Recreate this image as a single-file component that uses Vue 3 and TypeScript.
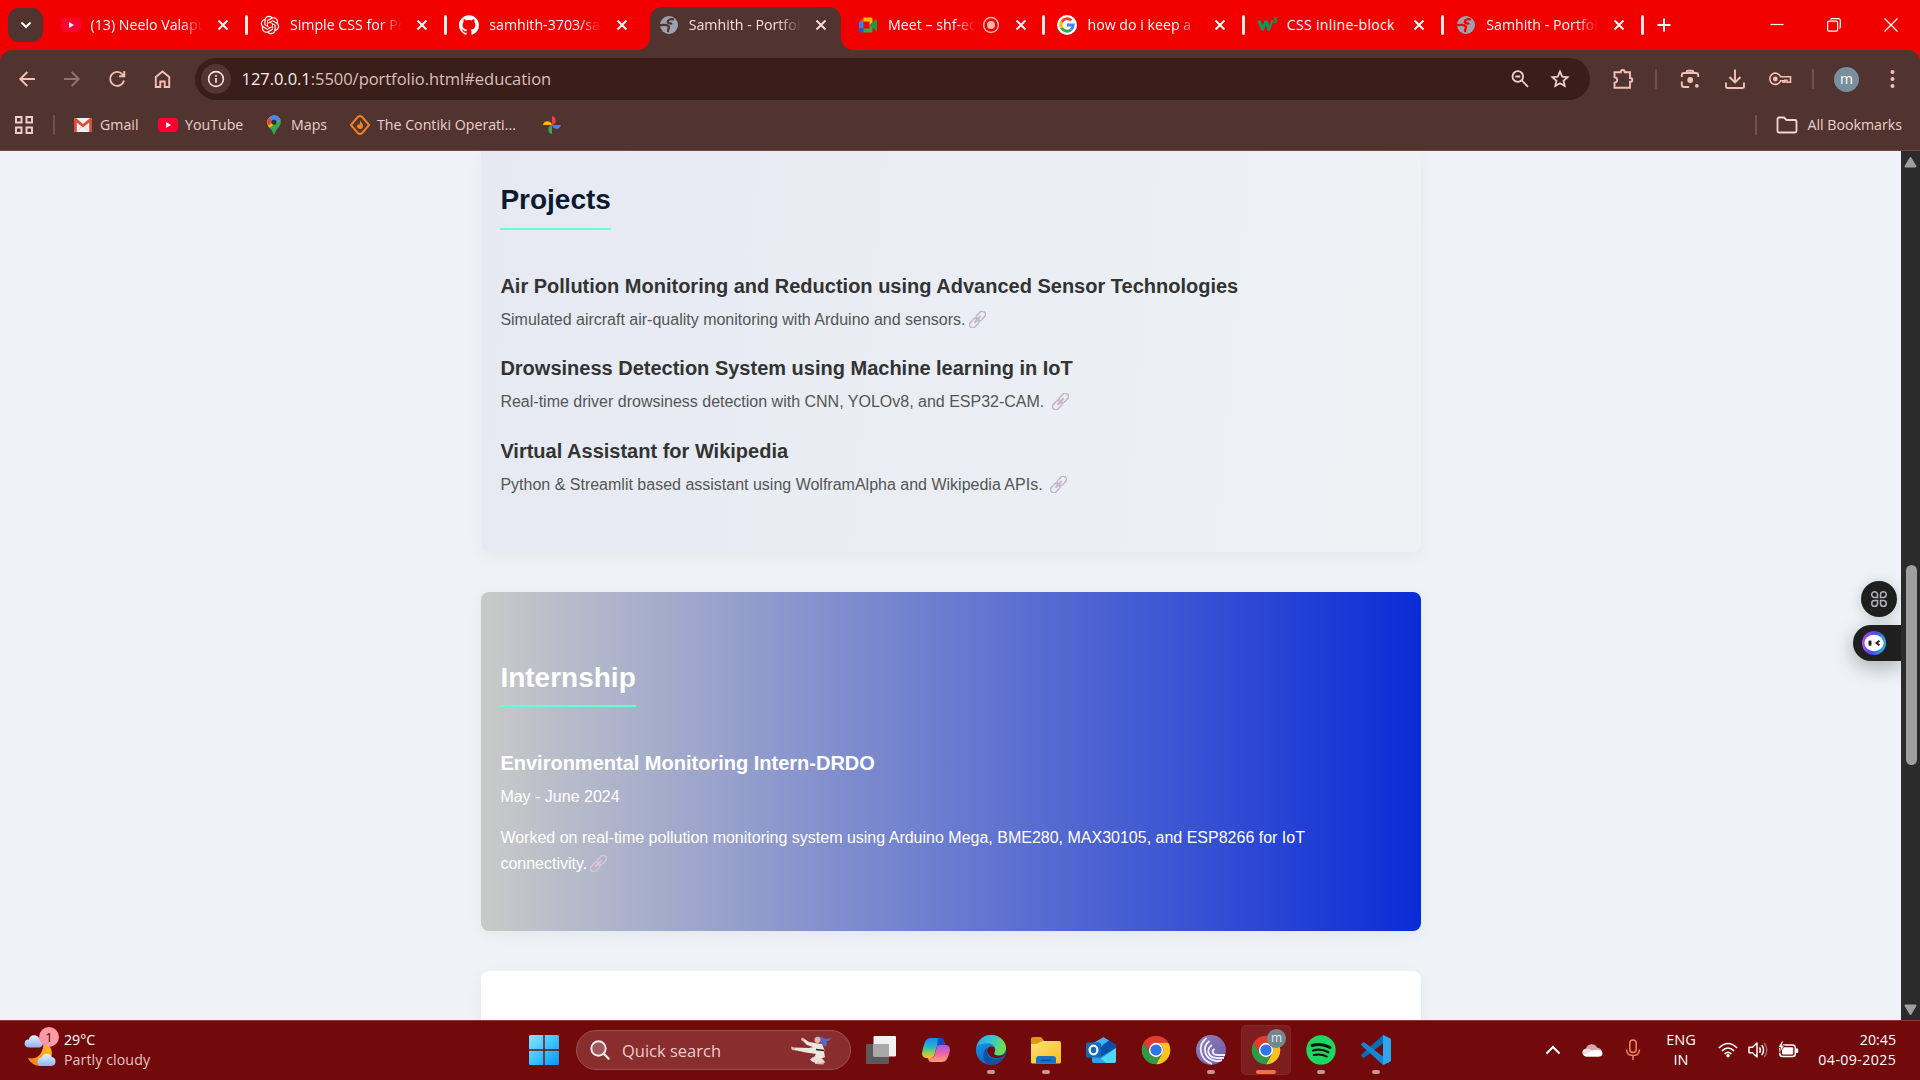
<script setup lang="ts">
interface Tab {
  icon: string
  title: string
  active?: boolean
  recording?: boolean
  separator?: boolean
}

interface Project {
  title: string
  text: string
  gap: boolean
}

const tabs: Tab[] = [
  { icon: 'youtube', title: '(13) Neelo Valapu', separator: true },
  { icon: 'openai', title: 'Simple CSS for Po', separator: true },
  { icon: 'github', title: 'samhith-3703/sa' },
  { icon: 'globe', title: 'Samhith - Portfol', active: true },
  { icon: 'meet', title: 'Meet – shf-ed', recording: true, separator: true },
  { icon: 'google', title: 'how do i keep a', separator: true },
  { icon: 'w3', title: 'CSS inline-block', separator: true },
  { icon: 'globe', title: 'Samhith - Portfol', separator: true },
]

const bookmarks = [
  { icon: 'gmail', label: 'Gmail', width: 85 },
  { icon: 'youtube', label: 'YouTube', width: 106 },
  { icon: 'maps', label: 'Maps', width: 86 },
  { icon: 'contiki', label: 'The Contiki Operati...', width: 192 },
  { icon: 'photos', label: '', width: 22 },
]

const projects: Project[] = [
  {
    title: 'Air Pollution Monitoring and Reduction using Advanced Sensor Technologies',
    text: 'Simulated aircraft air-quality monitoring with Arduino and sensors.',
    gap: false,
  },
  {
    title: 'Drowsiness Detection System using Machine learning in IoT',
    text: 'Real-time driver drowsiness detection with CNN, YOLOv8, and ESP32-CAM.',
    gap: true,
  },
  {
    title: 'Virtual Assistant for Wikipedia',
    text: 'Python & Streamlit based assistant using WolframAlpha and Wikipedia APIs.',
    gap: true,
  },
]

const apps = [
  { icon: 'taskview' },
  { icon: 'copilot' },
  { icon: 'edge', running: true },
  { icon: 'folder', running: true },
  { icon: 'outlook' },
  { icon: 'chrome' },
  { icon: 'bittorrent', running: true },
  { icon: 'chrome', focused: true },
  { icon: 'spotify', running: true },
  { icon: 'vscode', running: true },
]
</script>

<template>
  <div class="screen">
    <svg class="sprite" width="0" height="0" aria-hidden="true">
      <defs>
        <linearGradient id="g-win" x1="0" y1="0" x2="1" y2="1">
          <stop offset="0" stop-color="#8be3ff" /><stop offset=".5" stop-color="#3cc5fb" /><stop offset="1" stop-color="#0a93f5" />
        </linearGradient>
        <linearGradient id="g-edge1" x1="0" y1="0" x2="1" y2=".3">
          <stop offset="0" stop-color="#2aa7e8" /><stop offset=".55" stop-color="#35c7d0" /><stop offset="1" stop-color="#6fe04c" />
        </linearGradient>
        <linearGradient id="g-edge2" x1="0" y1="0" x2=".6" y2="1">
          <stop offset="0" stop-color="#1f9be6" /><stop offset="1" stop-color="#0b63c0" />
        </linearGradient>
        <linearGradient id="g-folder" x1="0" y1="0" x2="1" y2="1">
          <stop offset="0" stop-color="#ffe07a" /><stop offset="1" stop-color="#f9bf1c" />
        </linearGradient>
        <linearGradient id="g-cp1" x1="0" y1="0" x2="0" y2="1">
          <stop offset="0" stop-color="#1f86f0" /><stop offset=".45" stop-color="#25b8c8" /><stop offset=".75" stop-color="#9bd04a" /><stop offset="1" stop-color="#f5c02c" />
        </linearGradient>
        <linearGradient id="g-cp2" x1="0" y1="0" x2="0" y2="1">
          <stop offset="0" stop-color="#a35be8" /><stop offset=".5" stop-color="#ee62b0" /><stop offset="1" stop-color="#ffa552" />
        </linearGradient>
        <linearGradient id="g-bt" x1="0" y1="0" x2="1" y2="1">
          <stop offset="0" stop-color="#8f83bd" /><stop offset="1" stop-color="#6d5aa6" />
        </linearGradient>
        <linearGradient id="g-ring" x1="0" y1=".6" x2="1" y2=".8">
          <stop offset="0" stop-color="#b04bf0" /><stop offset=".45" stop-color="#4747f5" /><stop offset="1" stop-color="#22c3d8" />
        </linearGradient>
        <linearGradient id="g-cloud" x1="0" y1="0" x2="0" y2="1">
          <stop offset="0" stop-color="#e6f0ff" /><stop offset="1" stop-color="#8fb4ee" />
        </linearGradient>
        <linearGradient id="g-moon" x1="1" y1="0" x2="0" y2="1">
          <stop offset="0" stop-color="#ffc21a" /><stop offset="1" stop-color="#ee7a1c" />
        </linearGradient>
      </defs>

      <symbol id="i-youtube" viewBox="0 0 20 20">
        <rect x="0" y="3" width="20" height="14" rx="3.4" fill="#ff0033" />
        <path d="M8 7l5 3-5 3z" fill="#fff" />
      </symbol>
      <symbol id="i-openai" viewBox="-1 -1 26 26">
        <path fill="#fff" d="M22.2819 9.8211a5.9847 5.9847 0 0 0-.5157-4.9108 6.0462 6.0462 0 0 0-6.5098-2.9A6.0651 6.0651 0 0 0 4.9807 4.1818a5.9847 5.9847 0 0 0-3.9977 2.9 6.0462 6.0462 0 0 0 .7427 7.0966 5.98 5.98 0 0 0 .511 4.9107 6.051 6.051 0 0 0 6.5146 2.9001A5.9847 5.9847 0 0 0 13.2599 24a6.0557 6.0557 0 0 0 5.7718-4.2058 5.9894 5.9894 0 0 0 3.9977-2.9001 6.0557 6.0557 0 0 0-.7475-7.0729zm-9.022 12.6081a4.4755 4.4755 0 0 1-2.8764-1.0408l.1419-.0804 4.7783-2.7582a.7948.7948 0 0 0 .3927-.6813v-6.7369l2.02 1.1686a.071.071 0 0 1 .038.052v5.5826a4.504 4.504 0 0 1-4.4945 4.4944zm-9.6607-4.1254a4.4708 4.4708 0 0 1-.5346-3.0137l.142.0852 4.783 2.7582a.7712.7712 0 0 0 .7806 0l5.8428-3.3685v2.3324a.0804.0804 0 0 1-.0332.0615L9.74 19.9502a4.4992 4.4992 0 0 1-6.1408-1.6464zM2.3408 7.8956a4.485 4.485 0 0 1 2.3655-1.9728V11.6a.7664.7664 0 0 0 .3879.6765l5.8144 3.3543-2.0201 1.1685a.0757.0757 0 0 1-.071 0l-4.8303-2.7865A4.504 4.504 0 0 1 2.3408 7.872zm16.5963 3.8558L13.1038 8.364 15.1192 7.2a.0757.0757 0 0 1 .071 0l4.8303 2.7913a4.4944 4.4944 0 0 1-.6765 8.1042v-5.6772a.79.79 0 0 0-.407-.667zm2.0107-3.0231l-.142-.0852-4.7735-2.7818a.7759.7759 0 0 0-.7854 0L9.409 9.2297V6.8974a.0662.0662 0 0 1 .0284-.0615l4.8303-2.7866a4.4992 4.4992 0 0 1 6.6802 4.66zM8.3065 12.863l-2.02-1.1638a.0804.0804 0 0 1-.038-.0567V6.0742a4.4992 4.4992 0 0 1 7.3757-3.4537l-.142.0805L8.704 5.459a.7948.7948 0 0 0-.3927.6813zm1.0976-2.3654l2.602-1.4998 2.6069 1.4998v2.9994l-2.5974 1.4997-2.6067-1.4997Z" />
      </symbol>
      <symbol id="i-github" viewBox="0 0 24 24">
        <path fill="#fff" d="M12 .297c-6.63 0-12 5.373-12 12 0 5.303 3.438 9.8 8.205 11.385.6.113.82-.258.82-.577 0-.285-.01-1.04-.015-2.04-3.338.724-4.042-1.61-4.042-1.61C4.422 18.07 3.633 17.7 3.633 17.7c-1.087-.744.084-.729.084-.729 1.205.084 1.838 1.236 1.838 1.236 1.07 1.835 2.809 1.305 3.495.998.108-.776.417-1.305.76-1.605-2.665-.3-5.466-1.332-5.466-5.93 0-1.31.465-2.38 1.235-3.22-.135-.303-.54-1.523.105-3.176 0 0 1.005-.322 3.3 1.23.96-.267 1.98-.399 3-.405 1.02.006 2.04.138 3 .405 2.28-1.552 3.285-1.23 3.285-1.23.645 1.653.24 2.873.12 3.176.765.84 1.23 1.91 1.23 3.22 0 4.61-2.805 5.625-5.475 5.92.42.36.81 1.096.81 2.22 0 1.606-.015 2.896-.015 3.286 0 .315.21.69.825.57C20.565 22.092 24 17.592 24 12.297c0-6.627-5.373-12-12-12" />
      </symbol>
      <symbol id="i-globe" viewBox="0 0 20 20">
        <circle cx="10" cy="10" r="9" fill="#9aa3ad" />
        <path d="M14 4.300c-2-.4-4.700.3-5.200 2.100-.4 1.700 1.400 2 3.600 2.300M2 10.200c2.600-.6 6-.2 7.400.8 1.800 1.300-.5 2.400-.4 5.200" fill="none" stroke="currentColor" stroke-width="2.300" stroke-linecap="round" stroke-linejoin="round" />
      </symbol>
      <symbol id="i-meet" viewBox="0 0 20 20">
        <path d="M1 7l4.500-4.500V7z" fill="#ea4335" />
        <path d="M5.500 2.500H13a1.500 1.500 0 0 1 1.500 1.500v3.500L11.500 10V6.500h-6z" fill="#fbbc04" />
        <path d="M1 7h4.500v6.500H1z" fill="#2684fc" />
        <path d="M1 13.500h4.500v4H2.500A1.500 1.500 0 0 1 1 16z" fill="#0066da" />
        <path d="M5.500 13.500h6V10l3 2.500V16a1.500 1.500 0 0 1-1.500 1.500H5.500z" fill="#34a853" />
        <path d="M11.500 10l6.300-5.600q1.200-.8 1.200.6v10q0 1.400-1.200.6z" fill="#1e9a45" />
      </symbol>
      <symbol id="i-google" viewBox="0 0 20 20">
        <circle cx="10" cy="10" r="10" fill="#fff" />
        <g fill="none" stroke-width="3">
          <path d="M14.300 5.500A6.200 6.200 0 0 0 4.600 7" stroke="#ea4335" />
          <path d="M4.700 6.800a6.200 6.200 0 0 0 0 6.400" stroke="#fbbc05" />
          <path d="M4.600 13a6.200 6.200 0 0 0 9.300 1.800" stroke="#34a853" />
          <path d="M13.900 14.800A6.200 6.200 0 0 0 16.200 10H10" stroke="#4285f4" />
        </g>
      </symbol>
      <symbol id="i-w3" viewBox="0 0 20 20">
        <path d="M0 5.500h3.600l2 5.200 2-5.200h2.800l2 5.200 1.700-5.200h2.300l-3.600 10h-2.300L9 9.800l-2.200 5.700H4.500z" fill="#059b62" />
        <path d="M16.300 3h3l-1.400 1.800q1.800.2 1.500 1.700-.5 1.300-3.100.8" fill="none" stroke="#059b62" stroke-width="1.200" />
      </symbol>
      <symbol id="i-gmail" viewBox="0 0 20 20">
        <rect x="1" y="3" width="18" height="14" rx="1.500" fill="#f0f0f0" />
        <path d="M1 4.500A1.500 1.500 0 0 1 3.500 3.400L10 8.900l6.500-5.500A1.500 1.500 0 0 1 19 4.500V17h-2.800V7.500L10 12.500 3.800 7.500V17H2.500A1.500 1.500 0 0 1 1 15.500z" fill="#dd4b3e" />
        <path d="M3.800 17l4.800-5.600M16.200 17l-4.800-5.600" stroke="#cfcfcf" stroke-width=".8" />
      </symbol>
      <symbol id="i-maps" viewBox="0 0 20 20">
        <path d="M10 .5a6.800 6.800 0 0 1 6.800 6.800c0 4.700-5 6.200-6 11.500q-.8 1.400-1.600 0C8.700 14.500 3.200 12 3.200 7.300A6.800 6.800 0 0 1 10 .5z" fill="#34a853" />
        <path d="M10 .5a6.800 6.800 0 0 1 6.500 4.800L5.300 12.700C4 11 3.200 9.300 3.200 7.300A6.800 6.800 0 0 1 10 .5z" fill="#fbbc04" />
        <path d="M10 .5a6.800 6.800 0 0 1 6.500 4.800L9 9 4.800 3A6.800 6.800 0 0 1 10 .5z" fill="#4285f4" />
        <path d="M4.800 3L9 6.500 5 10.500A6.400 6.400 0 0 1 3.200 7.300 6.800 6.800 0 0 1 4.800 3z" fill="#ea4335" />
        <circle cx="10" cy="7.200" r="2.500" fill="#3b2b2a" />
      </symbol>
      <symbol id="i-contiki" viewBox="0 0 20 20">
        <path d="M8.600 1.200L.9 10l7.700 8.800M11.400 1.200L19.100 10l-7.700 8.800M8.200 1.800q1.800-1.500 3.600 0M8.200 18.200q1.800 1.500 3.600 0" fill="none" stroke="#f58220" stroke-width="2" />
        <path d="M10 4.500q.5 2 2 3.700t.9 4q-.8 2-2.900 2-2.700-.2-3-2.600-.1-1.700 1.200-2.700.4 1 1.100 1Q10.600 7.500 10 4.500z" fill="#f58220" />
      </symbol>
      <symbol id="i-photos" viewBox="0 0 20 20">
        <path d="M10 1a4.600 4.600 0 0 1 0 9z" fill="#ea4335" />
        <path d="M10 10h9a4.600 4.600 0 0 1-9 0z" fill="#4285f4" />
        <path d="M10 19a4.600 4.600 0 0 1 0-9z" fill="#34a853" />
        <path d="M1 10a4.600 4.600 0 0 1 9 0z" fill="#fbbc04" />
      </symbol>

      <symbol id="i-chrome" viewBox="1 1 46 46">
        <path d="M4.950 13A22 22 0 0 1 43.050 13L24 13A11 11 0 0 0 14.470 29.500Z" fill="#e33b2e" />
        <path d="M43.050 13A22 22 0 0 1 24 46L33.530 29.500A11 11 0 0 0 24 13Z" fill="#fcc31e" />
        <path d="M24 46A22 22 0 0 1 4.950 13L14.470 29.500A11 11 0 0 0 33.530 29.500Z" fill="#2c9c47" />
        <circle cx="24" cy="24" r="11" fill="#fff" />
        <circle cx="24" cy="24" r="8.600" fill="#2f74ea" />
      </symbol>
      <symbol id="i-taskview" viewBox="0 0 30 30">
        <rect x="0" y="9" width="23" height="20" rx="1" fill="#5a5a5a" />
        <rect x="7.500" y="1" width="22.500" height="20.500" rx="1" fill="#f1f1f1" />
        <path d="M7.500 9H23v12.500H7.500z" fill="#a9a9a9" />
      </symbol>
      <symbol id="i-copilot" viewBox="0 0 30 30">
        <path d="M9.500 3h10q2.500 0 3.300 2.500L24 10h-5.500q-2.300 0-3 2.300l-2.300 8.200q-.8 2.500-3.200 2.500H5q-4-.5-4-5 .6-5.500 3.200-11.500Q5.800 3 9.500 3z" fill="url(#g-cp1)" />
        <path d="M17 3h3q2.300 0 3 2.500L24 10h-5.500q-1.800 0-2.500 1.400z" fill="#1549c2" />
        <path d="M20.500 27h-10q-2.500 0-3.200-2.500L6.500 23H10q2.600 0 3.400-2.500l2.300-8.200q.7-2.300 3-2.300H25q4 .5 4 5-.6 4.500-3 9-1.600 3-5.500 3z" fill="url(#g-cp2)" />
      </symbol>
      <symbol id="i-edge" viewBox="0 0 30 30">
        <circle cx="15" cy="15" r="15" fill="url(#g-edge2)" />
        <path d="M.3 12.500C2 4.500 8 0 15 0c9 0 15 6.500 15 13 0 4.500-3.500 7.500-7.500 7.500-3 0-5-1-4.300-2.500 3-4.500-.5-9.700-6.500-9.700C6 8.300 1.500 10 .3 12.500z" fill="url(#g-edge1)" />
        <path d="M11.500 12.500c-2.500 5 1.300 11.500 8 11.500 3.500 0 6.500-1.200 8.300-2.300C25.500 27 20.500 30 15 30 8 29.500 7 23 7.300 20c.3-3.500 2-6 4.200-7.500z" fill="#12529f" />
        <path d="M15 11.500c-3 .3-4.500 3-3.600 5.700 1.300 3.600 5.200 6 9.900 5.800 4-.2 7.700-2.500 8.700-5-1.500 2-4.500 3.200-7.500 2.700-3-.3-4.800-1.200-4.300-2.700 1.800-3.200.5-6.800-3.200-6.500z" fill="#720a0b" />
      </symbol>
      <symbol id="i-folder" viewBox="0 0 30 30">
        <path d="M0 4q0-2 2-2h8l3 3.500V10H0z" fill="#dd9a0c" />
        <path d="M0 9q4 0 6-.2Q10 6 12.500 6H28q2 0 2 2v19q0 1.500-1.500 1.500h-27Q0 28.500 0 27z" fill="url(#g-folder)" />
        <path d="M5 28.500V24q0-3 3-3h14q3 0 3 3v4.500z" fill="#1673c8" />
        <rect x="9.500" y="24.500" width="11" height="1.600" rx=".8" fill="#0e4f96" />
      </symbol>
      <symbol id="i-outlook" viewBox="0 0 30 30">
        <path d="M5 9.500L17.500 2.200 30 10v16q0 2-2 2H8z" fill="#1a83dc" />
        <path d="M5 9.500L17.500 2.200 23 5.500 9 14z" fill="#43b0f2" />
        <path d="M23 5.500L30 10v3L14 22l-3-6z" fill="#0d4fa6" />
        <path d="M30 13v13q0 2-2 2H8z" fill="#55d6f8" />
        <path d="M6 18l5 2 9 8H8q-2 0-2-2z" fill="#2aa2ee" />
        <rect x="0" y="7.500" width="15" height="15" rx="1.500" fill="#0f6cbd" />
        <ellipse cx="7.500" cy="15" rx="3.900" ry="4.300" fill="none" stroke="#fff" stroke-width="2.200" />
      </symbol>
      <symbol id="i-bittorrent" viewBox="0 0 30 30">
        <circle cx="15" cy="15" r="15" fill="url(#g-bt)" />
        <g fill="none" stroke="#efecf8" stroke-width="1.900">
          <path d="M10.500 3C1 10 3.500 24.500 16 28.800" /><path d="M13.500 6c-8 6-5.500 18 6.500 20 2 .2 4 0 6-.8" />
          <path d="M16 10c-6.500 4.500-4 12.700 5 13h7" /><path d="M18.500 14c-3.500 2.200-1.500 6 3 6h7.500" />
        </g>
      </symbol>
      <symbol id="i-spotify" viewBox="0 0 30 30">
        <circle cx="15" cy="15" r="14.700" fill="#1ed760" />
        <g fill="none" stroke="#111" stroke-linecap="round">
          <path d="M6 10.500c6-1.700 12.500-1.100 18 2" stroke-width="2.900" /><path d="M7 15.500c5-1.400 10.700-.8 15.300 1.800" stroke-width="2.300" />
          <path d="M7.800 20c4.500-1 9-.6 13 1.600" stroke-width="1.900" />
        </g>
      </symbol>
      <symbol id="i-vscode" viewBox="0 0 30 30">
        <path d="M22 0l7 3.300q1 .5 1 1.700L22 8.500 3.500 22.600q-.8.500-1.500 0L.5 21.200q-.8-.8 0-1.600z" fill="#0a6cb4" />
        <path d="M22 30l7-3.300q1-.5 1-1.700l-8-3.500L3.500 7.400q-.8-.5-1.500 0L.5 8.800q-.8.800 0 1.600z" fill="#1686d3" />
        <path d="M22 0l7 3.300q1 .5 1 1.700v20q0 1.200-1 1.700L22 30z" fill="#2ba6ef" />
      </symbol>
      <symbol id="i-link" viewBox="0 0 17 17">
        <g fill="none" stroke="currentColor" stroke-width="1.500" transform="rotate(43 8.500 8.500)">
          <rect x="5.300" y="-1.600" width="6.400" height="10.600" rx="3.200" />
          <rect x="5.300" y="8" width="6.400" height="10.600" rx="3.200" />
          <path d="M8.500 4.800v7.400" stroke-width="2" stroke-linecap="round" class="link-bar" />
        </g>
      </symbol>
    </svg>

    <header class="tabstrip">
      <div class="tab-search">
        <svg width="14" height="14" viewBox="0 0 14 14"><path d="M2.500 4.500L7 9l4.500-4.500" fill="none" stroke="#fff" stroke-width="2" /></svg>
      </div>
      <div class="tabs">
        <div v-for="(tab, i) in tabs" :key="i" class="tab" :class="{ active: tab.active }">
          <svg class="favicon"><use :href="'#i-' + tab.icon" /></svg>
          <span class="tab-title" :class="{ short: tab.recording, full: tab.icon === 'w3' }">{{ tab.title }}</span>
          <svg v-if="tab.recording" class="rec" width="18" height="18" viewBox="0 0 18 18">
            <circle cx="9" cy="9" r="7.400" fill="none" stroke="#ffb4ac" stroke-width="1.500" /><circle cx="9" cy="9" r="4" fill="#ffb4ac" />
          </svg>
          <svg class="tab-close" width="12" height="12" viewBox="0 0 12 12"><path d="M1.500 1.500l9 9M10.500 1.500l-9 9" stroke="currentColor" stroke-width="1.900" /></svg>
          <i v-if="tab.separator" class="tab-sep"></i>
        </div>
      </div>
      <svg class="new-tab" width="14" height="14" viewBox="0 0 14 14"><path d="M7 .5v13M.5 7h13" stroke="#fff" stroke-width="2" /></svg>
      <div class="window-buttons">
        <svg width="14" height="14" viewBox="0 0 14 14"><path d="M.5 6.500h13" stroke="#fff" stroke-width="1.200" /></svg>
        <svg width="14" height="14" viewBox="0 0 14 14"><rect x=".6" y="3.200" width="10" height="10" rx="1.500" fill="none" stroke="#fff" stroke-width="1.200" /><path d="M3.500 1.500q.3-.9 1.300-.9h6.500q2 0 2 2v6.500q0 1-.9 1.300" fill="none" stroke="#fff" stroke-width="1.200" /></svg>
        <svg width="14" height="14" viewBox="0 0 14 14"><path d="M.5.5l13 13M13.500.5l-13 13" stroke="#fff" stroke-width="1.200" /></svg>
      </div>
    </header>

    <section class="chrome-bars">
      <div class="toolbar">
        <div class="slot"><svg width="20" height="20" viewBox="0 0 20 20"><path d="M18 10H3.500M10.300 3L3.300 10l7 7" /></svg></div>
        <div class="slot dim"><svg width="20" height="20" viewBox="0 0 20 20"><path d="M2 10h14.500M9.700 3l7 7-7 7" /></svg></div>
        <div class="slot"><svg width="20" height="20" viewBox="0 0 20 20"><path d="M17 11.500A7 7 0 1 1 15.300 5.100l1.500 1.600M17.300 2v5.200h-5.200" /></svg></div>
        <div class="slot"><svg width="20" height="20" viewBox="0 0 20 20"><path d="M3.800 8l6.700-5.500L17.200 8v10h-4.500v-5.500H8.300V18H3.800z" /></svg></div>
        <div class="omnibox">
          <span class="site-info">
            <svg width="18" height="18" viewBox="0 0 18 18"><circle cx="9" cy="9" r="7.400" fill="none" stroke="#f6e3df" stroke-width="1.600" /><path d="M9 8v4.800M9 5v1.700" stroke="#f6e3df" stroke-width="1.700" /></svg>
          </span>
          <span class="url"><b>127.0.0.1</b>:5500/portfolio.html#education</span>
          <span class="omni-actions">
            <svg width="20" height="20" viewBox="0 0 20 20"><circle cx="7.800" cy="7.500" r="5.300" /><path d="M11.700 11.400L18 17.800M5.300 7.500h5" /></svg>
            <svg width="20" height="20" viewBox="0 0 20 20"><path d="M10 2.600l2.200 5 5.400.500-4.100 3.600 1.200 5.300-4.700-2.800L5.300 17l1.200-5.300-4.100-3.600 5.400-.500z" /></svg>
          </span>
        </div>
        <div class="slot puzzle"><svg width="22" height="22" viewBox="0 0 22 22"><path d="M2.500 4.300h6.300q0-2.300 2-2.300t2 2.300h5.200v5.700q2.300 0 2.300 1.900t-2.300 1.900v6H2.500v-5q2.600-.5 2.600-2.900t-2.600-2.700z" /></svg></div>
        <i class="bar-sep"></i>
        <div class="slot"><svg width="22" height="22" viewBox="0 0 22 22"><path d="M2.800 9V7.300q0-2.300 2.300-2.300h11.800q2.300 0 2.300 2.300V9M2.800 13.500v3.200q0 2.300 2.300 2.300h5M7.500 4.200q.3-1.500 1.500-1.500h4q1.200 0 1.500 1.500" /><circle cx="11.200" cy="12" r="2.900" class="solid" /><circle cx="17.800" cy="17.800" r="1.900" class="solid" /></svg></div>
        <div class="slot"><svg width="22" height="22" viewBox="0 0 22 22"><path d="M11 1.500v12.500M5.500 9l5.500 5.500L16.500 9M2 14.500v3.700q0 1.800 1.800 1.800h14.400q1.800 0 1.800-1.800v-3.700" /></svg></div>
        <div class="slot"><svg class="key" width="24" height="22" viewBox="0 0 24 22"><path d="M12.600 8.800H22.500v5.400H19v-1.800h-2.200v1.800h-1.600v-1.400h-2.600a5.600 5.600 0 1 1 0-4z" /><circle cx="7.300" cy="11" r="2.400" class="solid" /></svg></div>
        <i class="bar-sep"></i>
        <div class="slot"><span class="avatar">m</span></div>
        <div class="slot"><svg width="20" height="22" viewBox="0 0 20 22"><g class="solid"><circle cx="10.500" cy="4" r="2" /><circle cx="10.500" cy="11" r="2" /><circle cx="10.500" cy="18" r="2" /></g></svg></div>
      </div>
      <div class="bookmarks">
        <svg class="apps-grid" width="20" height="20" viewBox="0 0 20 20"><path d="M2 2h5.500v5.500H2zM12.500 2H18v5.500h-5.500zM2 12.500h5.500V18H2zM12.500 12.500H18V18h-5.500z" fill="none" stroke="#f0cfc9" stroke-width="1.900" /></svg>
        <i class="bar-sep"></i>
        <div v-for="b in bookmarks" :key="b.icon" class="bookmark" :style="{ width: b.width + 'px' }">
          <svg class="favicon"><use :href="'#i-' + b.icon" /></svg>
          <span v-if="b.label">{{ b.label }}</span>
        </div>
        <div class="all-bookmarks">
          <i class="bar-sep"></i>
          <svg width="22" height="18" viewBox="0 0 22 18"><path d="M1.500 3q0-1.500 1.500-1.500h5l2.500 2.500H19q1.500 0 1.500 1.500V15q0 1.500-1.500 1.500H3Q1.500 16.500 1.500 15z" fill="none" stroke="#f0d8d3" stroke-width="1.800" /></svg>
          <span>All Bookmarks</span>
        </div>
      </div>
    </section>

    <div class="viewport">
      <main class="page">
        <section class="card projects">
          <h2>Projects</h2>
          <article v-for="p in projects" :key="p.title">
            <h3>{{ p.title }}</h3>
            <p>{{ p.text }}<svg class="link" :class="{ wide: p.gap }"><use href="#i-link" /></svg></p>
          </article>
        </section>
        <section class="card internship">
          <h2>Internship</h2>
          <h3>Environmental Monitoring Intern-DRDO</h3>
          <p class="dates">May - June 2024</p>
          <p>Worked on real-time pollution monitoring system using Arduino Mega, BME280, MAX30105, and ESP8266 for IoT connectivity.<svg class="link faint"><use href="#i-link" /></svg></p>
        </section>
        <section class="card next"></section>
      </main>
      <aside class="widgets">
        <div class="widget-round">
          <svg width="18" height="18" viewBox="0 0 18 18"><path d="M7.500 7.500H4.600A2.900 2.900 0 1 1 7.500 4.600zM10.500 7.500V4.600a2.900 2.900 0 1 1 2.900 2.900zM7.500 10.500v2.900a2.900 2.900 0 1 1-2.900-2.900zM10.500 10.500h2.900a2.900 2.900 0 1 1-2.900 2.900z" fill="none" stroke="#b4b1b8" stroke-width="1.500" /></svg>
        </div>
        <div class="widget-pill">
          <svg width="24" height="24" viewBox="0 0 24 24"><circle cx="12" cy="12" r="12" fill="url(#g-ring)" /><ellipse cx="12" cy="12" rx="9.600" ry="8.300" fill="#fff" /><rect x="6.500" y="9.500" width="3" height="5.200" rx="1" fill="#222" /><path d="M17.500 9.800l-3 2.300 3 2.200" fill="none" stroke="#222" stroke-width="1.900" /></svg>
        </div>
      </aside>
      <div class="scrollbar">
        <svg width="19" height="22" viewBox="0 0 19 22"><path d="M9.500 7l5 8.500h-10z" fill="#9f9f9f" stroke="#9f9f9f" stroke-width="2" stroke-linejoin="round" /></svg>
        <div class="thumb"></div>
        <svg width="19" height="22" viewBox="0 0 19 22"><path d="M9.500 16l5-8.500h-10z" fill="#9f9f9f" stroke="#9f9f9f" stroke-width="2" stroke-linejoin="round" /></svg>
      </div>
    </div>

    <footer class="taskbar">
      <div class="weather">
        <svg width="36" height="38" viewBox="0 0 36 38">
          <path d="M27 18a12 12 0 0 1-23 9q9 2 13-5t1-10q7 1 9 6z" fill="url(#g-moon)" />
          <path d="M4.500 16.500a4 4 0 0 1 .3-8 5.500 5.500 0 0 1 10.500-.5q3 0 3.500 3.500t-3 5z" fill="url(#g-cloud)" />
          <path d="M17 35a4.300 4.300 0 0 1 .5-8.500 5.500 5.500 0 0 1 10.200-.5q3.800.5 3.800 4.500t-4 4.500z" fill="url(#g-cloud)" />
        </svg>
        <span class="weather-badge">1</span>
        <div class="weather-text"><span>29°C</span><span class="soft">Partly cloudy</span></div>
      </div>
      <svg class="start" width="30" height="30" viewBox="0 0 30 30"><path d="M0 1.500Q0 0 1.500 0h12.800v14.300H0zM15.700 0h12.800Q30 0 30 1.500v12.800H15.700zM0 15.700h14.300V30H1.500Q0 30 0 28.500zM15.700 15.700H30v12.800q0 1.500-1.500 1.500H15.700z" fill="url(#g-win)" /></svg>
      <div class="search">
        <svg width="20" height="20" viewBox="0 0 20 20"><circle cx="8.500" cy="8.500" r="7.200" fill="#a05a5c" stroke="#f3eded" stroke-width="1.900" /><path d="M13.800 13.800l4.800 4.800" stroke="#f3eded" stroke-width="2.200" stroke-linecap="round" /></svg>
        <span>Quick search</span>
        <svg class="karate" width="42" height="30" viewBox="0 0 42 30">
          <path d="M24 2.500q4-2.500 8 .500 4 1.500 9-.500-2 3.500-6 4 2 2.500-.500 5-3-.500-4.500-4.500-2-1.500-6-.500z" fill="#5868c8" />
          <circle cx="26.500" cy="5" r="3" fill="#e8b79b" />
          <path d="M24 8l7 1 2.500 6-.5 2 1 5-8 3.500-4-1.500 3-5-10-1.500L3 15l.5-2.500L18 13l4-1-6-2-4-4 1.500-2L18 7z" fill="#ece6e0" />
          <path d="M0 11.500l3.500 1L3 15.500l-2.500-1zM11 2.500l3 1.500-1.500 2.500-2.500-1.500zM24 27l9 .5-.5 2L24 29z" fill="#e8b79b" />
          <path d="M22 22l9 1.500 3.500 4-10 .5q-5-2-5.500-3.500z" fill="#e4dcd6" />
          <path d="M25 14.500l8 1" stroke="#222" stroke-width="1.600" />
        </svg>
      </div>
      <div class="apps">
        <div v-for="(a, i) in apps" :key="i" class="app" :class="{ running: a.running, focused: a.focused }">
          <svg width="30" height="30"><use :href="'#i-' + a.icon" /></svg>
          <span v-if="a.focused" class="profile">m</span>
          <i class="indicator"></i>
        </div>
      </div>
      <div class="tray">
        <svg class="chev" width="16" height="10" viewBox="0 0 16 10"><path d="M1.500 8.500L8 2l6.500 6.500" fill="none" stroke="#fff" stroke-width="2" /></svg>
        <svg class="cloud" width="21" height="14" viewBox="0 0 21 14"><path d="M4 5.500A6 6 0 0 1 15 4.500q4 .5 5 4L12 12H4z" fill="#d4a9aa" /><path d="M4 13.500a3.900 3.900 0 0 1-.5-7.700q3-.6 5 .9L17 10l3 .500q.5 3-3.500 3z" fill="#f0dfdf" /><path d="M2 12l9-4.500q2-1 5-.5 4 0 4.500 3 0 3.500-4 3.500H4q-1.500-.3-2-1.500z" fill="#fff" /></svg>
        <svg class="mic" width="16" height="22" viewBox="0 0 16 22"><g fill="none" stroke="#f0875a" stroke-width="1.500"><rect x="4.800" y="1" width="6.400" height="12.500" rx="3.200" /><path d="M1.500 10.500q.3 6 6.500 6t6.500-6M8 16.500V21" /></g></svg>
        <div class="lang"><span>ENG</span><span>IN</span></div>
        <svg class="wifi" width="20" height="16" viewBox="0 0 20 16"><g fill="none" stroke="#fff" stroke-width="1.600"><path d="M.8 6q9.200-9 18.400 0M3.800 9q6.200-6 12.400 0M6.600 12q3.400-3.200 6.800 0" /></g><circle cx="10" cy="13.800" r="1.700" fill="#fff" /></svg>
        <svg class="sound" width="20" height="18" viewBox="0 0 20 18"><path d="M1 6.200h3.500L9 2v14l-4.500-4.200H1z" fill="none" stroke="#fff" stroke-width="1.500" stroke-linejoin="round" /><path d="M11.500 6.300q1.800 2.700 0 5.400M13.800 4q3.500 5 0 10" fill="none" stroke="#fff" stroke-width="1.500" /><path d="M16.300 2q5 7 0 14" fill="none" stroke="#b06566" stroke-width="1.400" /></svg>
        <svg class="battery" width="21" height="18" viewBox="0 0 21 18"><rect x="1.800" y="4" width="15.500" height="11.500" rx="2.800" fill="none" stroke="#fff" stroke-width="1.500" /><rect x="4" y="6.200" width="11.200" height="7.200" rx="1" fill="#fff" /><path d="M18 7.500h1.200q1 0 1 1v2.500q0 1-1 1H18z" fill="#fff" /><path d="M3.800 0L0 6.500h2.500L1.700 12 6.500 4.800H4L5.500 0z" fill="#fff" stroke="#720a0b" stroke-width=".8" /></svg>
        <div class="clock"><span>20:45</span><span class="date">04-09-2025</span></div>
      </div>
    </footer>
  </div>
</template>

<style>
body {
  margin: 0;
  overflow: hidden;
}
</style>

<style scoped>
.screen {
  display: flex;
  flex-direction: column;
  width: 1920px;
  height: 1080px;
  overflow: hidden;
  font-family: "Open Sans", "Noto Sans", sans-serif;
  background: #f20000;
}
.sprite {
  position: absolute;
}
svg {
  display: block;
  flex: none;
}
.tabstrip {
  display: flex;
  align-items: center;
  height: 50px;
  background: #f20000;
  color: #fff;
}
.tab-search {
  display: flex;
  align-items: center;
  justify-content: center;
  width: 35px;
  height: 34px;
  margin-left: 8px;
  border-radius: 11px;
  background: #513430;
}
.tabs {
  display: flex;
  align-self: stretch;
  margin-left: 4.500px;
}
.tab {
  position: relative;
  display: flex;
  align-items: center;
  box-sizing: border-box;
  width: 199.400px;
  padding-left: 13px;
  color: #fff;
}
.favicon {
  width: 20px;
  height: 20px;
}
.tab > .favicon {
  color: #f20000;
}
.tab.active > .favicon {
  color: #513430;
}
.tab-title {
  flex: none;
  width: 112px;
  margin-left: 10px;
  white-space: nowrap;
  font-size: 14.200px;
  line-height: 20px;
  -webkit-mask-image: linear-gradient(90deg, #000 80%, transparent);
  mask-image: linear-gradient(90deg, #000 80%, transparent);
}
.tab-title.short {
  width: 88px;
  -webkit-mask-image: linear-gradient(90deg, #000 75%, transparent);
  mask-image: linear-gradient(90deg, #000 75%, transparent);
}
.tab-title.full {
  letter-spacing: 0.250px;
  -webkit-mask-image: none;
  mask-image: none;
}
.rec {
  margin-left: 6px;
}
.tab-close {
  margin-left: 14.500px;
}
.tab-sep {
  position: absolute;
  right: -1px;
  top: 15px;
  width: 3px;
  height: 20px;
  border-radius: 2px;
  background: #ffe9e7;
}
.tab.active {
  color: #f6dfdb;
}
.tab.active::before {
  content: "";
  position: absolute;
  left: 4px;
  right: 4px;
  top: 7px;
  bottom: 0;
  z-index: 0;
  border-radius: 12px 12px 0 0;
  background: #513430;
}
.tab.active::after {
  content: "";
  position: absolute;
  left: -8px;
  right: -8px;
  bottom: 0;
  height: 12px;
  background:
    radial-gradient(circle at 0 0, transparent 11.500px, #513430 12px) left / 12px 12px no-repeat,
    radial-gradient(circle at 100% 0, transparent 11.500px, #513430 12px) right / 12px 12px no-repeat;
}
.tab.active > * {
  position: relative;
  z-index: 1;
}
.new-tab {
  margin-left: 14px;
}
.window-buttons {
  display: flex;
  gap: 43px;
  margin-left: auto;
  margin-right: 22px;
}
.chrome-bars {
  height: 101px;
  box-sizing: border-box;
  border-radius: 12px 12px 0 0;
  border-bottom: 1px solid #6b4b47;
  background: #513430;
}
.toolbar {
  display: flex;
  align-items: center;
  height: 58px;
  padding-left: 4.500px;
}
.slot {
  display: flex;
  align-items: center;
  justify-content: center;
  width: 45px;
}
.slot svg {
  fill: none;
  stroke: #f3bfb6;
  stroke-width: 1.900;
}
.slot .solid {
  fill: #f3bfb6;
  stroke: none;
}
.slot .key {
  stroke-width: 1.600;
}
.slot.dim svg {
  stroke: #96726c;
}
.puzzle {
  margin-left: 10px;
}
.bar-sep {
  flex: none;
  width: 2px;
  height: 20px;
  border-radius: 1px;
  background: #77504b;
}
.toolbar .bar-sep {
  margin: 0 10px;
}
.omnibox {
  display: flex;
  align-items: center;
  box-sizing: border-box;
  width: 1395px;
  height: 42px;
  margin-left: 10.500px;
  padding: 0 20px 0 6px;
  border-radius: 21px;
  background: #3a1e1a;
}
.site-info {
  display: flex;
  align-items: center;
  justify-content: center;
  width: 30px;
  height: 30px;
  border-radius: 50%;
  background: #533631;
}
.url {
  margin-left: 10.500px;
  font-size: 16.500px;
  line-height: 24px;
  letter-spacing: -0.040px;
  color: #d9c0bb;
}
.url b {
  font-weight: 400;
  color: #fbeeec;
}
.omni-actions {
  display: flex;
  gap: 20px;
  margin-left: auto;
}
.omni-actions svg {
  fill: none;
  stroke: #ecd2cc;
  stroke-width: 1.800;
}
.avatar {
  width: 25px;
  height: 25px;
  border-radius: 50%;
  background: #78909c;
  color: #fff;
  font-size: 14px;
  line-height: 23px;
  text-align: center;
}
.bookmarks {
  display: flex;
  align-items: center;
  height: 34px;
  font-size: 14.200px;
  color: #ecd0cb;
}
.bookmarks span {
  margin-bottom: 2px;
}
.apps-grid {
  margin-left: 14px;
}
.bookmarks > .bar-sep {
  margin: 0 18px 0 19px;
}
.bookmark {
  display: flex;
  align-items: center;
  gap: 7px;
  white-space: nowrap;
}
.all-bookmarks {
  display: flex;
  align-items: center;
  margin-left: auto;
  margin-right: 18px;
}
.all-bookmarks svg {
  margin: 0 9px 0 19px;
}

.viewport {
  display: flex;
  height: 869px;
  overflow: hidden;
  background: #eff3f8;
  font-family: "Liberation Sans", Arial, sans-serif;
}
.page {
  width: 940px;
  margin: 0 auto 0 481px;
}
.card {
  box-sizing: border-box;
  padding-left: 19.400px;
  border-radius: 8px;
  box-shadow: 0 4px 15px rgba(0, 0, 0, 0.05);
}
.projects {
  height: 401px;
  padding-top: 27px;
  border-radius: 0 0 8px 8px;
  background: linear-gradient(95deg, #e6e9f2, #eef2f5);
}
.internship {
  height: 339px;
  margin-top: 40px;
  padding-top: 64px;
  background: linear-gradient(90deg, #c9cac8, #0a2cd7);
  color: #fff;
}
.next {
  height: 100px;
  margin-top: 40px;
  background: #fff;
}
h2 {
  display: table;
  margin: 0 0 40px;
  padding-bottom: 6px;
  border-bottom: 2px solid #64ffda;
  font-size: 28px;
  line-height: 44px;
  color: #0a192f;
}
.internship h2 {
  padding-bottom: 5px;
  color: #fff;
}
h3 {
  margin: 0 0 5px;
  font-size: 20px;
  line-height: 32px;
  color: #333;
}
.internship h3 {
  color: #fff;
}
p {
  margin: 0 0 19.900px;
  font-size: 16px;
  line-height: 25.600px;
  color: #555;
}
.internship p {
  max-width: 840px;
  margin-bottom: 0;
  color: #fff;
}
.internship .dates {
  margin-bottom: 15.400px;
}
.link {
  display: inline-block;
  width: 17px;
  height: 17px;
  margin-left: 3px;
  vertical-align: -3px;
  color: #c5b5cb;
}
.link.wide {
  margin-left: 7.500px;
}
.link.faint {
  color: #dcc3da;
}
.widgets {
  position: relative;
  display: flex;
  flex-direction: column;
  align-items: flex-end;
  width: 48px;
  padding-top: 430px;
}
.widget-round,
.widget-pill {
  display: flex;
  align-items: center;
  height: 36px;
  background: #1f1f1f;
}
.widget-round {
  justify-content: center;
  width: 36px;
  margin-right: 4px;
  border-radius: 50%;
  box-shadow: 0 2px 14px rgba(0, 0, 0, 0.18);
}
.widget-pill {
  box-sizing: border-box;
  width: 48px;
  margin-top: 8px;
  padding-left: 9px;
  border-radius: 18px 0 0 18px;
  box-shadow: 0 6px 20px rgba(0, 0, 0, 0.3);
}
.scrollbar {
  position: relative;
  display: flex;
  flex-direction: column;
  align-items: center;
  width: 19px;
  background: #2b2b2b;
}
.thumb {
  width: 11px;
  height: 200px;
  margin: 392px 0 auto 1px;
  border-radius: 6px;
  background: #9f9f9f;
}

.taskbar {
  display: flex;
  align-items: center;
  box-sizing: border-box;
  height: 60px;
  padding-bottom: 1px;
  border-top: 1px solid #8a3a38;
  background: #720a0b;
  color: #fff;
}
.weather {
  position: relative;
  display: flex;
  align-items: center;
  width: 505px;
  padding-left: 24px;
}
.weather svg {
  margin-right: 4px;
}
.weather-badge {
  position: absolute;
  left: 39px;
  top: -3px;
  width: 20px;
  height: 20px;
  border-radius: 50%;
  background: #ff99a4;
  color: #3a0a0c;
  font-size: 13px;
  line-height: 20px;
  text-align: center;
}
.weather-text {
  display: flex;
  flex-direction: column;
  margin-bottom: 1px;
  font-size: 14.200px;
  line-height: 20px;
}
.soft {
  letter-spacing: 0.080px;
  color: #e5c4c4;
}
.search {
  display: flex;
  align-items: center;
  box-sizing: border-box;
  width: 275px;
  height: 40px;
  margin-left: 17px;
  padding: 0 17px 0 13px;
  border: 1px solid #9b5052;
  border-radius: 20px;
  background: #8a2d2f;
  font-size: 16.500px;
  color: #e8cccd;
}
.search span {
  margin-left: 12px;
}
.karate {
  margin-left: auto;
}
.apps {
  display: flex;
  margin-left: 5px;
}
.app {
  position: relative;
  display: flex;
  align-items: center;
  justify-content: center;
  width: 50px;
  height: 50px;
  margin-right: 5px;
}
.indicator {
  position: absolute;
  left: 21px;
  bottom: 1px;
  width: 8px;
  height: 4px;
  border-radius: 2px;
}
.running .indicator {
  background: #c79596;
}
.focused {
  border-radius: 5px;
  background: rgba(255, 255, 255, 0.08);
  box-shadow: inset 0 0 0 1px rgba(255, 255, 255, 0.05);
}
.focused .indicator {
  left: 15px;
  width: 20px;
  background: #ff6a4a;
}
.profile {
  position: absolute;
  left: 26px;
  top: 4px;
  width: 19px;
  height: 19px;
  border-radius: 50%;
  background: #74868f;
  color: #e5eaec;
  font-size: 12px;
  line-height: 17px;
  text-align: center;
}
.tray {
  display: flex;
  align-items: center;
  margin-left: auto;
  margin-right: 24px;
}
.cloud {
  margin-left: 21px;
}
.mic {
  margin-left: 22px;
}
.lang {
  display: flex;
  flex-direction: column;
  align-items: center;
  width: 32px;
  margin-left: 24px;
  font-size: 14.500px;
  line-height: 20px;
}
.wifi {
  margin-left: 21px;
}
.sound {
  margin-left: 10px;
}
.battery {
  margin-left: 10px;
}
.clock {
  display: flex;
  flex-direction: column;
  align-items: flex-end;
  width: 97px;
  margin-bottom: 1px;
  font-size: 14.200px;
  line-height: 20px;
}
.date {
  margin-right: -0.400px;
  letter-spacing: 0.400px;
}
</style>
